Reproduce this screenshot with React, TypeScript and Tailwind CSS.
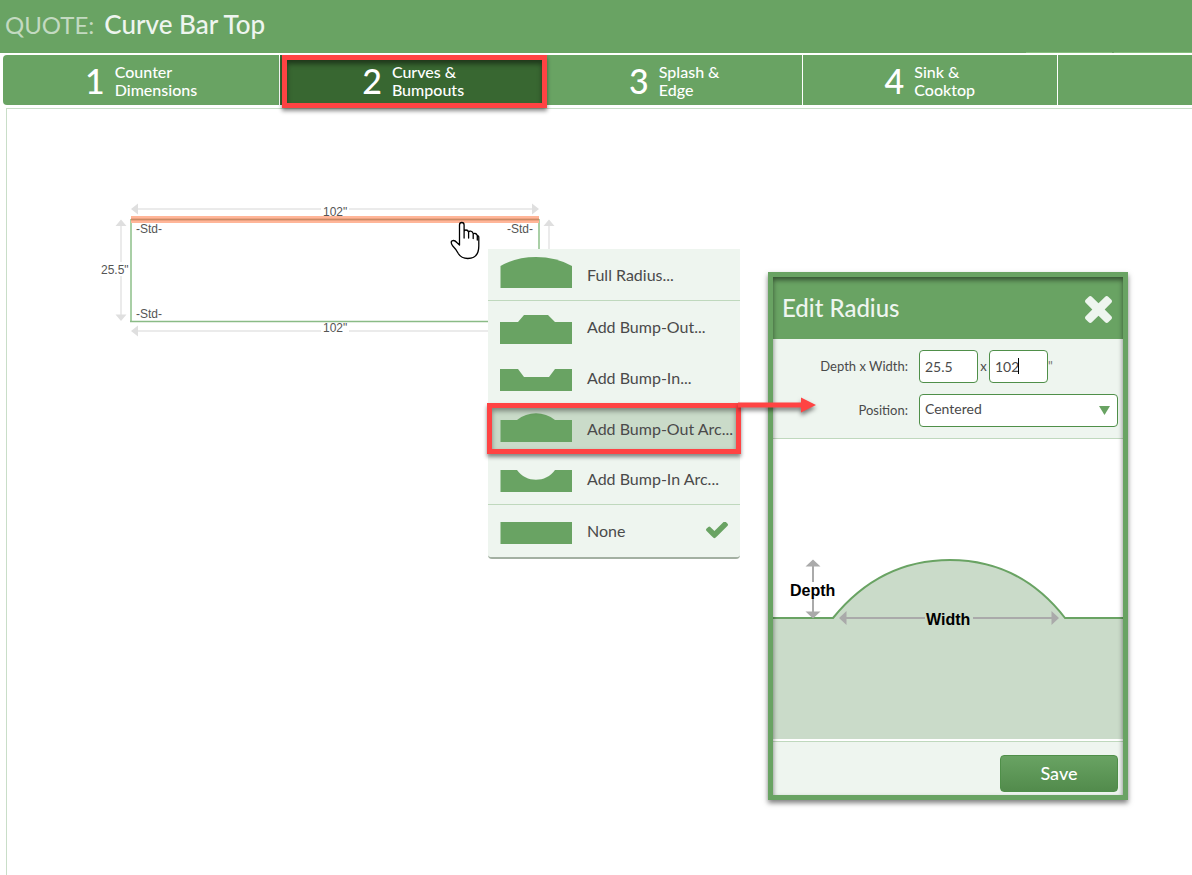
import React, { useState } from "react";

type Step = { number: number; lines: [string, string] };

const steps: Step[] = [
  { number: 1, lines: ["Counter", "Dimensions"] },
  { number: 2, lines: ["Curves &", "Bumpouts"] },
  { number: 3, lines: ["Splash &", "Edge"] },
  { number: 4, lines: ["Sink &", "Cooktop"] },
];

type Shape = { label: string; path: string; divider?: boolean };

const shapes: Shape[] = [
  { label: "Full Radius...", path: "M0.500 31V9Q16 0 36 0T72 9V31Z", divider: true },
  { label: "Add Bump-Out...", path: "M0 35V13H18L24 6H48L55 13H72V35Z" },
  { label: "Add Bump-In...", path: "M0 31V9H18L24 17H49L55 9H72V31Z" },
  { label: "Add Bump-Out Arc...", path: "M0.500 31V9H17C28 0 44 0 55 9H72V31Z" },
  { label: "Add Bump-In Arc...", path: "M0.500 31V9H17C26 22 46 22 55 9H72V31Z", divider: true },
  { label: "None", path: "M0.500 9H72V31H0.500Z" },
];

function StepTab({ step, active }: { step: Step; active: boolean }) {
  return (
    <button
      type="button"
      aria-current={active ? "step" : undefined}
      className={
        "relative flex h-[50px] shrink-0 items-center gap-[10px] border-r border-white px-[82px] pt-0.5 text-left font-medium text-white first:rounded-l " +
        (active ? "z-10 bg-[#386731]" : "bg-[#69a363]")
      }
    >
      <span className="text-[34px] leading-none">{step.number}</span>
      <span className="text-base leading-[18px]">
        {step.lines[0]}
        <br />
        {step.lines[1]}
      </span>
      {active && (
        <span className="pointer-events-none absolute -right-px -bottom-[3px] left-0.5 top-0 border-[5px] border-[#ff4343] shadow-[0_3px_4px_rgba(0,0,0,0.45),inset_0_4px_5px_rgba(0,0,0,0.45)]" />
      )}
    </button>
  );
}

function CounterDrawing() {
  return (
    <svg
      width="470"
      height="150"
      viewBox="98 200 470 150"
      fontFamily="'Liberation Sans', Arial, sans-serif"
      fontSize="12"
      fill="#555"
    >
      <g stroke="#ebebeb" strokeWidth="2">
        <path d="M137 209H321M349 209H533M137 331H321M349 331H533M121 225V262M121 276V316M549 225V316" />
      </g>
      <g fill="#dfdfdf">
        <path d="M131 209l7-5.500v11zM539 209l-7-5.500v11zM131 331l7-5.500v11zM539 331l-7-5.500v11z" />
        <path d="M121 219.500l5.500 6.500h-11zM121 321l5.500-6.500h-11zM549 219.500l5.500 6.500h-11zM549 321l5.500-6.500h-11z" />
      </g>
      <path d="M131 219V321M539 219V321" stroke="#a9cfa6" strokeWidth="2" />
      <path d="M130 321.500H540" stroke="#8abb86" strokeWidth="1.500" />
      <rect x="131" y="216" width="408" height="7" fill="#ffb699" />
      <rect x="131" y="218" width="408" height="3" fill="#eda382" />
      <path d="M131 219.500H539" stroke="#c98a66" strokeWidth="1" />
      <text x="323" y="216">102"</text>
      <text x="323" y="332">102"</text>
      <text x="101" y="274">25.5"</text>
      <text x="136" y="233">-Std-</text>
      <text x="507" y="233">-Std-</text>
      <text x="136" y="318">-Std-</text>
      <path
        d="M459.500 225q0-2.500 2.300-2.500t2.300 2.500v13V231.500q0-1.500 1.900-1.500t2.600 2v6V232q.3-1 2-.8t2.600 2.300v5V234q.5-.8 2-.5t2.100 2V240v-3.500q1.500-1.500 1.500 1v8.500q0 12.500-11 12.500-6.500 0-9.500-5-2-4-5.500-7.500-2.500-3.500-1-5 2.500-1.500 5 1.500l2.700 2.500z"
        fill="#fff"
        stroke="#000"
        strokeWidth="1.300"
        strokeLinejoin="round"
      />
    </svg>
  );
}

function ShapeMenu() {
  return (
    <div
      role="menu"
      className="absolute left-[488px] top-[249px] w-[252px] rounded-b border-b-2 border-[#a3b0a2] bg-[#eef5ef] py-px"
    >
      {shapes.map((shape) => {
        const hovered = shape.label === "Add Bump-Out Arc...";
        return (
          <button
            key={shape.label}
            type="button"
            role="menuitem"
            className={
              "relative flex h-[51px] w-full items-center gap-[15px] pl-3 text-left text-base text-[#4a4a4a] " +
              (hovered ? "bg-[#cadbc9] " : "") +
              (shape.divider ? "border-b border-[#bfd8bd]" : "")
            }
          >
            <svg width="72" height="36" viewBox="0 0 72 36" className="shrink-0">
              <path d={shape.path} fill="#69a363" />
            </svg>
            <span className="whitespace-nowrap">{shape.label}</span>
            {shape.label === "None" && (
              <svg
                viewBox="121 380 1550 1192"
                className="mr-3 ml-auto h-[17px] w-[22px]"
                fill="#69a363"
              >
                <path d="M1671 566q0 40-28 68l-724 724-136 136q-28 28-68 28t-68-28l-136-136-362-362q-28-28-28-68t28-68l136-136q28-28 68-28t68 28l294 295 656-657q28-28 68-28t68 28l136 136q28 28 28 68z" />
              </svg>
            )}
            {hovered && (
              <span className="pointer-events-none absolute -inset-x-px inset-y-0 border-[5px] border-[#ff4343] shadow-[0_3px_4px_rgba(0,0,0,0.45),inset_0_3px_5px_rgba(0,0,0,0.4)]" />
            )}
          </button>
        );
      })}
    </div>
  );
}

function RadiusDiagram() {
  return (
    <svg
      viewBox="773 439 350 300"
      className="block w-full bg-white"
      fontFamily="'Liberation Sans', Arial, sans-serif"
      fontSize="16"
      fontWeight="bold"
    >
      <path d="M773 618H833Q880 560 950 560T1065 618H1123V739H773Z" fill="#cadbc9" />
      <path
        d="M773 618H833Q880 560 950 560T1065 618H1123"
        fill="none"
        stroke="#69a363"
        strokeWidth="2"
      />
      <path d="M813 565V582M813 598V613M845 618H925M973 618H1053" stroke="#aaa" strokeWidth="2" />
      <path
        d="M813 559.500l7.500 7h-15zM813 618.500l7.500-7h-15zM839 618l7.500-7v14zM1059 618l-7.500-7v14z"
        fill="#aaa"
      />
      <text x="790" y="596">Depth</text>
      <text x="926" y="625">Width</text>
    </svg>
  );
}

function EditRadiusDialog() {
  const [depth, setDepth] = useState("25.5");
  const [width, setWidth] = useState("102");
  const field =
    "h-[33px] rounded border border-[#4f8f49] bg-white px-[5px] text-sm text-[#4a4a4a] outline-none";
  return (
    <section
      role="dialog"
      aria-label="Edit Radius"
      className="absolute left-[768px] top-[272px] w-[360px] border-[5px] border-[#69a363] bg-white shadow-[0_3px_5px_rgba(0,0,0,0.5)]"
    >
      <header className="flex h-[62px] items-center justify-between bg-[#69a363] pr-[11px] pl-[9px] text-[#eef5ef]">
        <h2 className="text-2xl font-medium">Edit Radius</h2>
        <button type="button" aria-label="Close" className="mt-[3px]">
          <svg viewBox="302 366 1188 1188" className="size-[27px]" fill="currentColor">
            <path d="M1490 1322q0 40-28 68l-136 136q-28 28-68 28t-68-28l-294-294-294 294q-28 28-68 28t-68-28l-136-136q-28-28-28-68t28-68l294-294-294-294q-28-28-28-68t28-68l136-136q28-28 68-28t68 28l294 294 294-294q28-28 68-28t68 28l136 136q28 28 28 68t-28 68l-294 294 294 294q28 28 28 68z" />
          </svg>
        </button>
      </header>
      <div className="flex flex-col gap-[11px] border-b border-[#bfd8bd] bg-[#eef5ef] py-[11px] text-[13px] text-[#4a4a4a]">
        <div className="flex items-center">
          <label htmlFor="depth" className="mr-[11px] w-[135px] text-right">
            Depth x Width:
          </label>
          <input
            id="depth"
            className={field + " w-[59px]"}
            value={depth}
            onChange={(e) => setDepth(e.target.value)}
          />
          <span className="w-[11px] text-center">x</span>
          <span className="relative">
            <input
              aria-label="Width"
              className={field + " w-[59px]"}
              value={width}
              onChange={(e) => setWidth(e.target.value)}
            />
            <span className="absolute left-[29px] top-2 h-4 w-px bg-black" />
          </span>
          <span className="text-[#777]">"</span>
        </div>
        <div className="flex items-center pr-[5px]">
          <label htmlFor="position" className="mr-[11px] w-[135px] text-right">
            Position:
          </label>
          <div className="relative flex-1">
            <select
              id="position"
              className={field + " w-full appearance-none pb-[3px]"}
              defaultValue="Centered"
            >
              <option>Centered</option>
            </select>
            <svg
              viewBox="0 0 11 9"
              className="pointer-events-none absolute right-2 top-3 h-[9px] w-[11px]"
            >
              <path d="M0 0H11L5.500 9Z" fill="#69a363" />
            </svg>
          </div>
        </div>
      </div>
      <RadiusDiagram />
      <footer className="mt-0.5 flex h-[54px] items-center justify-end border-t border-[#bfd8bd] bg-[#eef5ef] pt-[10px] pr-[5px] pb-px">
        <button
          type="button"
          className="h-[37px] w-[118px] rounded border border-[#4f8f49] bg-linear-to-b from-[#69a363] to-[#528b4c] text-lg font-medium text-white"
        >
          Save
        </button>
      </footer>
      <span className="pointer-events-none absolute inset-0 shadow-[inset_0_3px_5px_rgba(0,0,0,0.5)]" />
    </section>
  );
}

export default function App() {
  return (
    <div className="relative flex min-h-screen flex-col overflow-hidden bg-white font-['Lato','Liberation_Sans',sans-serif]">
      <header className="flex h-[53px] items-center gap-[10px] bg-[#69a363] pb-1 pl-[5px]">
        <span className="text-2xl text-[#c3dac1]">QUOTE:</span>
        <h1 className="text-[26px] font-medium text-[#eef5ef]">Curve Bar Top</h1>
        <span className="-mb-1 ml-auto flex gap-0.5 self-end">
          <span className="h-px w-[86px] bg-[#84bd7c]" />
          <span className="h-px w-[78px] bg-[#84bd7c]" />
        </span>
      </header>
      <nav className="mt-0.5 ml-[3px] flex">
        {steps.map((step) => (
          <StepTab key={step.number} step={step} active={step.number === 2} />
        ))}
        <div className="flex-1 bg-[#69a363]" />
      </nav>
      <main className="mt-[3px] ml-1.5 flex-1 border-t border-l border-[#c9dec8] pt-[91px] pl-[91px]">
        <CounterDrawing />
      </main>
      <ShapeMenu />
      <EditRadiusDialog />
      <svg
        viewBox="0 0 80 24"
        className="pointer-events-none absolute left-[738px] top-[393px] h-6 w-20 drop-shadow-[0_3px_2px_rgba(0,0,0,0.5)]"
      >
        <path d="M0 9.500H63V4.500L78 12L63 19.500V14.500H0Z" fill="#ff4343" />
      </svg>
    </div>
  );
}
